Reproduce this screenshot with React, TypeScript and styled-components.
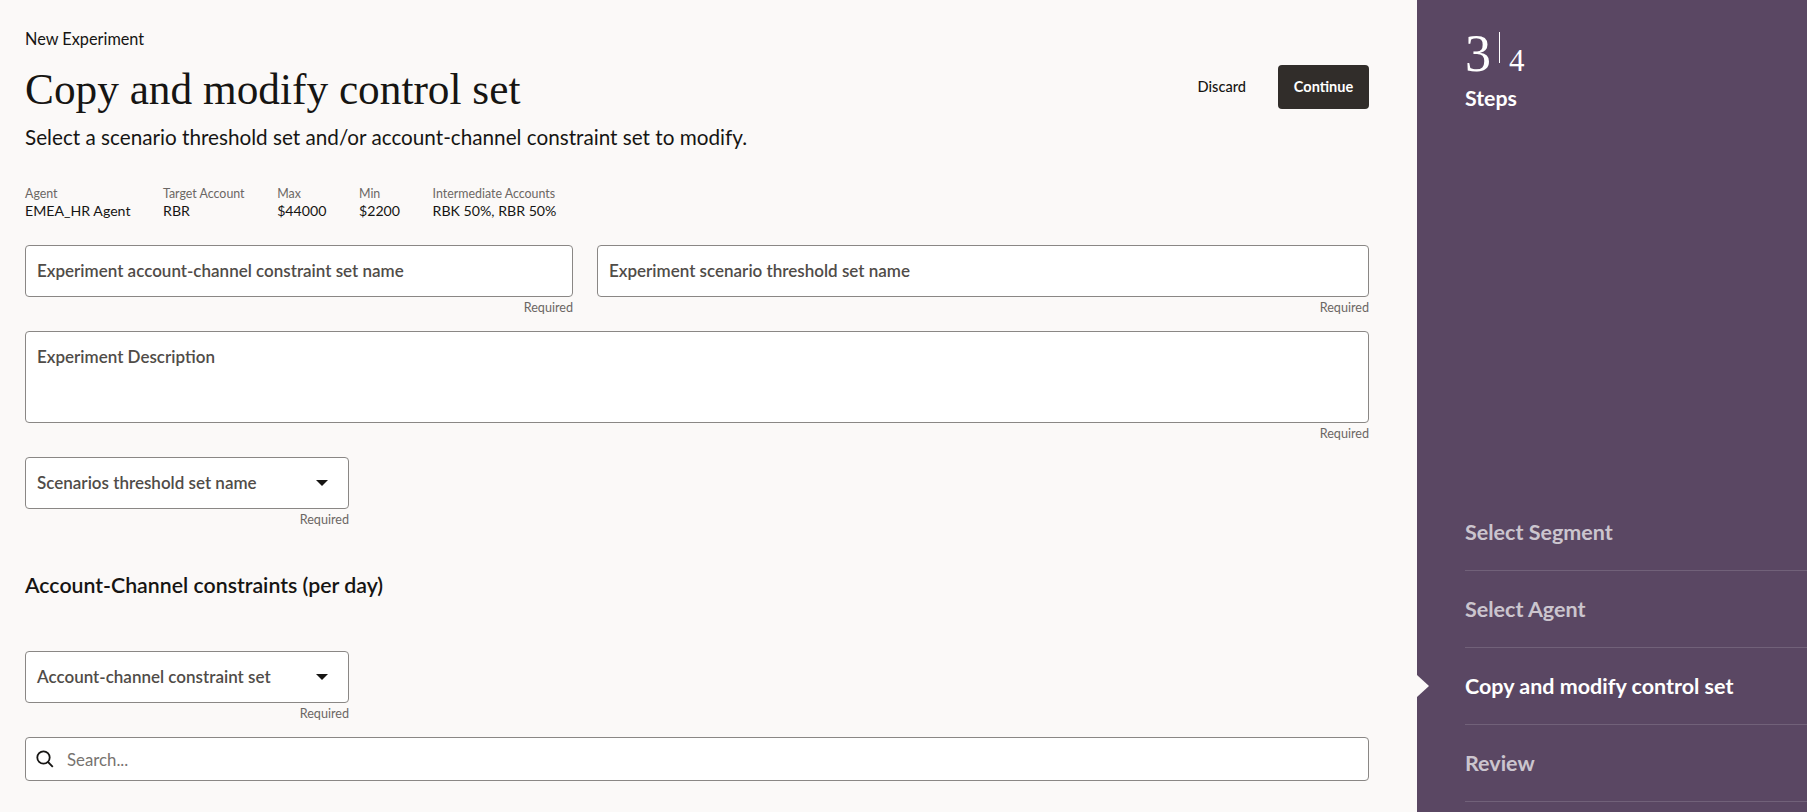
import React from 'react';
import styled, { createGlobalStyle } from 'styled-components';

const SANS = 'Lato, "Noto Sans", sans-serif';
const SERIF = '"Liberation Serif", "DejaVu Serif", serif';

const GlobalStyle = createGlobalStyle`
  html, body { margin: 0; height: 100%; overflow: hidden; }
  body { background: #fbf9f8; color: #161513; font-family: ${SANS}; }
  * { box-sizing: border-box; }
`;

const Page = styled.div`
  display: grid;
  grid-template-columns: 1417px 390px;
  height: 812px;
  overflow: hidden;
`;

const Main = styled.main`
  padding: 29px 48px 0 25px;
`;

const Crumb = styled.div`
  font-size: 16.3px;
  line-height: 20px;
`;

const TitleRow = styled.div`
  display: flex;
  align-items: center;
  justify-content: space-between;
  margin-top: 15px;
  height: 46px;
`;

const Title = styled.h1`
  margin: 4px 0 0;
  font-family: ${SERIF};
  font-weight: 400;
  font-size: 43.3px;
  line-height: 46px;
`;

const Actions = styled.div`
  display: flex;
  align-items: center;
  gap: 32px;
`;

const DiscardLink = styled.span`
  margin-top: -2px;
  font-size: 14.6px;
  font-weight: 500;
`;

const ContinueButton = styled.button`
  width: 91px;
  height: 44px;
  padding: 0 0 2px;
  border: 0;
  border-radius: 4px;
  background: #312d2a;
  color: #fff;
  font: 700 14.5px ${SANS};
`;

const Subtitle = styled.p`
  margin: 15px 0 0;
  font-size: 20.7px;
  line-height: 24px;
`;

const MetaRow = styled.div`
  display: flex;
  gap: 32.6px;
  margin-top: 36px;
`;

const MetaItem = styled.div`
  display: flex;
  flex-direction: column;
`;

const MetaLabel = styled.span`
  font-size: 12.4px;
  line-height: 17px;
  color: #6b6764;
`;

const MetaValue = styled.span`
  font-size: 14.15px;
  line-height: 18px;
`;

const FieldRow = styled.div`
  display: grid;
  grid-template-columns: 548px 1fr;
  gap: 24px;
  margin-top: 25px;
`;

const Field = styled.div<{ $width?: number; $top?: number }>`
  width: ${(p) => (p.$width ? `${p.$width}px` : 'auto')};
  margin-top: ${(p) => p.$top ?? 0}px;
`;

const Box = styled.div<{ $height?: number; $top?: boolean }>`
  display: flex;
  align-items: ${(p) => (p.$top ? 'flex-start' : 'center')};
  justify-content: space-between;
  height: ${(p) => p.$height ?? 52}px;
  padding: ${(p) => (p.$top ? '15px 11px' : '0 11px')};
  background: #fff;
  border: 1px solid #8a8785;
  border-radius: 4px;
`;

const BoxLabel = styled.span`
  font-size: 17px;
  line-height: 20px;
  font-weight: 600;
  color: #504c48;
`;

const Caret = styled.svg`
  width: 12px;
  height: 6px;
  margin-right: 9px;
  fill: #161513;
`;

const Hint = styled.div`
  margin-top: 3px;
  text-align: right;
  font-size: 12.6px;
  line-height: 16px;
  color: #6b6764;
`;

const SectionTitle = styled.h2`
  margin: 44px 0 0;
  font-size: 21.3px;
  line-height: 26px;
  font-weight: 600;
`;

const SearchBox = styled.div`
  display: flex;
  align-items: center;
  gap: 13px;
  height: 44px;
  margin-top: 15px;
  padding: 0 10px;
  background: #fff;
  border: 1px solid #8a8785;
  border-radius: 4px;
  font-size: 16.8px;
  color: #77736f;
`;

const SearchIcon = styled.svg`
  width: 18px;
  height: 18px;
  fill: none;
  stroke: #161513;
  stroke-width: 1.8;
`;

const Side = styled.aside`
  position: relative;
  display: flex;
  flex-direction: column;
  padding: 30px 0 0 48px;
  background: #5a4763;
  color: #fff;
`;

const Counter = styled.div`
  display: flex;
  align-items: baseline;
  height: 48px;
  font-family: ${SERIF};
`;

const CounterNow = styled.span`
  font-size: 52px;
  line-height: 48px;
`;

const CounterRule = styled.span`
  align-self: flex-start;
  width: 1px;
  height: 31px;
  margin: 2px 9px 0 8px;
  background: #fff;
`;

const CounterTotal = styled.span`
  font-size: 31px;
  line-height: 34px;
`;

const StepsTitle = styled.div`
  margin-top: 7px;
  font-size: 21.3px;
  line-height: 26px;
  font-weight: 700;
`;

const StepList = styled.ol`
  list-style: none;
  margin: auto 0 10px;
  padding: 0;
`;

const Step = styled.li<{ $active?: boolean }>`
  position: relative;
  display: flex;
  align-items: center;
  height: 77px;
  border-bottom: 1px solid rgba(255, 255, 255, 0.14);
  font-size: 21.5px;
  font-weight: 700;
  color: ${(p) => (p.$active ? '#fff' : 'rgba(255, 255, 255, 0.7)')};
`;

// 현재 단계를 가리키는 화살표
const StepMarker = styled.span`
  position: absolute;
  left: -48px;
  top: 27px;
  width: 12px;
  height: 22px;
  background: #fbf9f8;
  clip-path: polygon(0 0, 100% 50%, 0 100%);
`;

const meta = [
  ['Agent', 'EMEA_HR Agent'],
  ['Target Account', 'RBR'],
  ['Max', '$44000'],
  ['Min', '$2200'],
  ['Intermediate Accounts', 'RBK 50%, RBR 50%'],
];

const steps = ['Select Segment', 'Select Agent', 'Copy and modify control set', 'Review'];

const SelectField: React.FC<{ label: string; top: number }> = ({ label, top }) => (
  <Field $width={324} $top={top}>
    <Box>
      <BoxLabel>{label}</BoxLabel>
      <Caret viewBox="0 0 12 6">
        <path d="M0 0h12L6 6z" />
      </Caret>
    </Box>
    <Hint>Required</Hint>
  </Field>
);

const App: React.FC = () => (
  <Page>
    <GlobalStyle />
    <Main>
      <Crumb>New Experiment</Crumb>
      <TitleRow>
        <Title>Copy and modify control set</Title>
        <Actions>
          <DiscardLink>Discard</DiscardLink>
          <ContinueButton>Continue</ContinueButton>
        </Actions>
      </TitleRow>
      <Subtitle>Select a scenario threshold set and/or account-channel constraint set to modify.</Subtitle>
      <MetaRow>
        {meta.map(([label, value]) => (
          <MetaItem key={label}>
            <MetaLabel>{label}</MetaLabel>
            <MetaValue>{value}</MetaValue>
          </MetaItem>
        ))}
      </MetaRow>
      <FieldRow>
        <Field>
          <Box>
            <BoxLabel>Experiment account-channel constraint set name</BoxLabel>
          </Box>
          <Hint>Required</Hint>
        </Field>
        <Field>
          <Box>
            <BoxLabel>Experiment scenario threshold set name</BoxLabel>
          </Box>
          <Hint>Required</Hint>
        </Field>
      </FieldRow>
      <Field $top={15}>
        <Box $height={92} $top>
          <BoxLabel>Experiment Description</BoxLabel>
        </Box>
        <Hint>Required</Hint>
      </Field>
      <SelectField label="Scenarios threshold set name" top={15} />
      <SectionTitle>Account-Channel constraints (per day)</SectionTitle>
      <SelectField label="Account-channel constraint set" top={53} />
      <SearchBox>
        <SearchIcon viewBox="0 0 18 18">
          <circle cx="7.5" cy="7.5" r="6.2" />
          <path d="M12 12l4.8 4.8" />
        </SearchIcon>
        <span>Search...</span>
      </SearchBox>
    </Main>
    <Side>
      <Counter>
        <CounterNow>3</CounterNow>
        <CounterRule />
        <CounterTotal>4</CounterTotal>
      </Counter>
      <StepsTitle>Steps</StepsTitle>
      <StepList>
        {steps.map((step, i) => (
          <Step key={step} $active={i === 2}>
            {i === 2 && <StepMarker />}
            {step}
          </Step>
        ))}
      </StepList>
    </Side>
  </Page>
);

export default App;
